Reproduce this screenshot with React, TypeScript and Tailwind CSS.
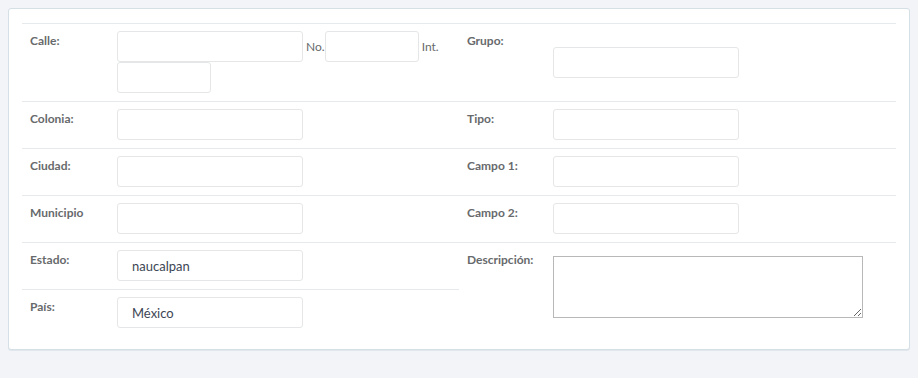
import React from 'react';

const labelCls = 'shrink-0 pl-2 text-[12px] leading-5 font-bold text-[#676a6c]';
const inputCls =
  'h-[31px] rounded-[3px] border border-[#e5e6e7] bg-white px-[14px] text-[13px] text-[#3d4654] outline-none';

const Field: React.FC<{ label: string; value?: string; right?: boolean }> = ({ label, value, right }) => (
  <div className="flex border-t border-[#e7eaec] pt-[7px] pb-[8px]">
    <div className={`${labelCls} ${right ? 'w-[94px]' : 'w-[95px]'}`}>{label}</div>
    <div className="flex">
      <input className={`${inputCls} w-[186px]`} defaultValue={value} />
    </div>
  </div>
);

const App: React.FC = () => {
  return (
    <div className="min-h-[378px] bg-[#f3f4f8] p-2" style={{ fontFamily: 'Lato, "Open Sans", sans-serif' }}>
      <div className="rounded-[3px] border border-[#d5dfe6] bg-white px-[13px] pt-[14px] pb-[13px] shadow-[0_1px_0_#e1e7ec]">
        <div className="grid grid-cols-2">
          {/* row 1 */}
          <div className="flex border-t border-[#e7eaec] pt-[7px] pb-[8px]">
            <div className={`${labelCls} w-[95px]`}>Calle:</div>
            <div className="flex flex-wrap items-center">
              <input className={`${inputCls} w-[186px]`} />
              <span className="pl-[3px] text-[12px] text-[#676a6c]">No.</span>
              <input className={`${inputCls} w-[94px]`} />
              <span className="px-[3px] text-[12px] text-[#676a6c]">Int.</span>
              <input className={`${inputCls} w-[94px]`} />
            </div>
          </div>
          <div className="flex border-t border-[#e7eaec] pt-[7px] pb-[8px]">
            <div className={`${labelCls} w-[94px]`}>Grupo:</div>
            <div className="flex items-center">
              <input className={`${inputCls} w-[186px]`} />
            </div>
          </div>

          <Field label="Colonia:" />
          <Field label="Tipo:" right />
          <Field label="Ciudad:" />
          <Field label="Campo 1:" right />
          <Field label="Municipio" />
          <Field label="Campo 2:" right />

          <Field label="Estado:" value="naucalpan" />
          <div className="row-span-2 flex border-t border-[#e7eaec] pt-[7px] pb-[8px]">
            <div className={`${labelCls} w-[94px]`}>Descripción:</div>
            <div className="flex items-start">
              <textarea className="mt-[6px] h-[62px] w-[310px] border border-[#b8b8b8] bg-white px-2 text-[13px] outline-none" />
            </div>
          </div>
          <Field label="País:" value="México" />
        </div>
      </div>
    </div>
  );
};

export default App;
